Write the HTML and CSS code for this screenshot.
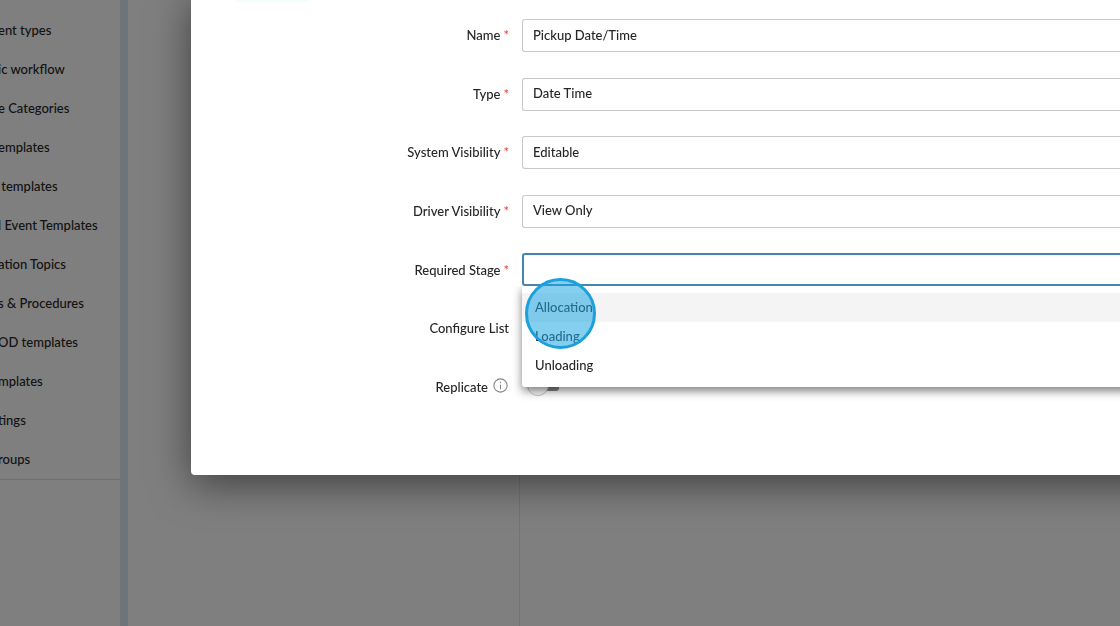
FILE: index.html
```html
<!DOCTYPE html>
<html lang="en">
<head>
<meta charset="utf-8">
<title>Edit field</title>
<link rel="stylesheet" href="styles.css">
</head>
<body>
<div class="app">
  <nav class="sidebar" aria-label="Settings">
    <ul class="menu">
      <li><a href="#">ent types</a></li>
      <li><a href="#">ic workflow</a></li>
      <li><a href="#">e Categories</a></li>
      <li><a href="#">emplates</a></li>
      <li><a href="#">&nbsp;templates</a></li>
      <li><a href="#">l Event Templates</a></li>
      <li><a href="#">ation Topics</a></li>
      <li><a href="#">s &amp; Procedures</a></li>
      <li><a href="#">OD templates</a></li>
      <li><a href="#">mplates</a></li>
      <li><a href="#">tings</a></li>
      <li><a href="#">roups</a></li>
    </ul>
  </nav>
  <main class="content"><div class="pane"></div></main>
</div>
<div class="backdrop"></div>
<div class="dialog" role="dialog" aria-label="Edit field">
  <div class="tab-edge"></div>
  <form class="form">
    <div class="row">
      <label class="label" for="name">Name <span class="req">*</span></label>
      <input class="field" id="name" type="text" value="Pickup Date/Time">
    </div>
    <div class="row">
      <label class="label" for="type">Type <span class="req">*</span></label>
      <select class="field" id="type"><option>Date Time</option></select>
    </div>
    <div class="row">
      <label class="label" for="system">System Visibility <span class="req">*</span></label>
      <select class="field" id="system"><option>Editable</option></select>
    </div>
    <div class="row">
      <label class="label" for="driver">Driver Visibility <span class="req">*</span></label>
      <select class="field" id="driver"><option>View Only</option></select>
    </div>
    <div class="row">
      <label class="label" for="stage">Required Stage <span class="req">*</span></label>
      <div class="combo">
        <input class="field field-active" id="stage" type="text" role="combobox" aria-expanded="true" aria-controls="stages">
        <div class="options" id="stages" role="listbox">
          <div class="option option-hover" role="option">Allocation</div>
          <div class="option" role="option">Loading</div>
          <div class="option" role="option">Unloading</div>
        </div>
        <span class="click-marker"></span>
      </div>
    </div>
    <div class="row">
      <span class="label">Configure List</span>
    </div>
    <div class="row">
      <label class="label" for="replicate">Replicate
        <svg class="info" viewBox="0 0 14 14" aria-hidden="true"><circle cx="7" cy="7" r="6.2"/><path d="M7 6.2v4.2M7 3.5v1.3"/></svg>
      </label>
      <input class="toggle" id="replicate" type="checkbox" role="switch">
    </div>
  </form>
</div>
</body>
</html>
```
FILE: styles.css
```css
* { box-sizing: border-box; }

body {
  margin: 0;
  min-height: 100vh;
  overflow: hidden;
  position: relative;
  background: #fff;
  color: #262626;
  font: 13px/20px "Proxima Nova", Lato, sans-serif;
  font-weight: 500;
}

.app { display: flex; min-height: 100vh; }

.sidebar {
  width: 128px;
  flex: none;
  overflow: hidden;
  border-right: 8px solid #dee9f2;
}

.menu {
  list-style: none;
  margin: 0 0 0 -2px;
  padding: 11px 0 0;
  border-bottom: 1px solid #dcdcdc;
}

.menu a {
  display: block;
  padding: 9px 0 10px;
  color: #262626;
  text-decoration: none;
  white-space: nowrap;
}

.content { flex: 1; display: flex; }
.pane { width: 392px; border-right: 1px solid #e6e6e6; }

.backdrop { position: fixed; inset: 0; background: rgba(0, 0, 0, .5); }

.dialog {
  position: absolute;
  top: -8px;
  left: 191px;
  right: -60px;
  padding: 8px 60px 59px 0;
  background: #fff;
  border-radius: 4px;
  box-shadow: 0 9px 40px rgba(0, 0, 0, .5);
}

.tab-edge { width: 72px; height: 1px; margin-left: 46px; background: #effdfb; }

.form {
  display: grid;
  grid-auto-rows: 1fr;
  min-height: 410px;
  margin-top: 5px;
}

.row {
  display: grid;
  grid-template-columns: 318px 1fr;
  column-gap: 13px;
  align-items: center;
}

.label {
  display: flex;
  justify-content: flex-end;
  align-items: center;
  gap: 3px;
}

.req { color: #e5483f; }

.field {
  appearance: none;
  display: block;
  width: 100%;
  height: 33px;
  margin: 1px 0 0;
  padding: 0 0 2px 10px;
  border: 1px solid #c8c8c8;
  border-right: 0;
  border-radius: 3px 0 0 3px;
  outline: 0;
  background: #fff;
  color: inherit;
  font: inherit;
}

.field-active { margin: 0; border: 2px solid #4686a8; border-right: 0; }

.combo { position: relative; }

.options {
  position: absolute;
  z-index: 1;
  top: 100%;
  left: 0;
  right: -20px;
  padding: 7px 0;
  background: #fff;
  border-radius: 0 0 0 3px;
  box-shadow: 0 4px 10px rgba(0, 0, 0, .5);
  clip-path: inset(0 0 -20px -20px);
}

.option { height: 29px; padding: 4px 13px; }
.option-hover { background: #f4f4f4; }

.click-marker {
  position: absolute;
  z-index: 2;
  top: 25px;
  left: 3px;
  width: 71px;
  height: 71px;
  border: 3px solid #1ca0dc;
  border-radius: 50%;
  background: rgba(28, 164, 228, .54);
}

.info {
  width: 15px;
  height: 15px;
  margin: 0 1px 2px 2px;
  fill: none;
  stroke: #858585;
  stroke-width: 1;
}

.toggle {
  appearance: none;
  position: relative;
  width: 30px;
  height: 14px;
  margin: 0 0 6px 7px;
  border-radius: 3px;
  background: #858585;
}

.toggle::before {
  content: "";
  position: absolute;
  top: -3px;
  left: -2px;
  width: 20px;
  height: 20px;
  border: 1px solid #c4c4c4;
  border-radius: 50%;
  background: #fafafa;
}
```
